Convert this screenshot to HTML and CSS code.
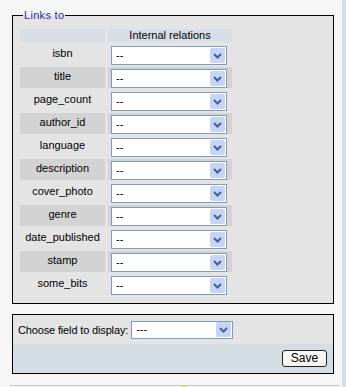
FILE: index.html
```html
<!DOCTYPE html>
<html>
<head>
<meta charset="utf-8">
<link rel="stylesheet" href="styles.css">
</head>
<body>
<div class="page">
  <div class="main">
    <fieldset class="links">
      <legend>Links to</legend>
      <table class="rel">
        <tr class="head"><th class="c1"></th><th class="c2">Internal relations</th></tr>
        <tr><td class="lbl">isbn</td><td class="fld"><div class="sel"><span>--</span><i class="arr"><svg width="9" height="6" viewBox="0 0 9 6"><path d="M1 1 L4.5 4.5 L8 1" fill="none" stroke="#4a5f8a" stroke-width="2"/></svg></i></div></td></tr>
        <tr class="alt"><td class="lbl">title</td><td class="fld"><div class="sel"><span>--</span><i class="arr"><svg width="9" height="6" viewBox="0 0 9 6"><path d="M1 1 L4.5 4.5 L8 1" fill="none" stroke="#4a5f8a" stroke-width="2"/></svg></i></div></td></tr>
        <tr><td class="lbl">page_count</td><td class="fld"><div class="sel"><span>--</span><i class="arr"><svg width="9" height="6" viewBox="0 0 9 6"><path d="M1 1 L4.5 4.5 L8 1" fill="none" stroke="#4a5f8a" stroke-width="2"/></svg></i></div></td></tr>
        <tr class="alt"><td class="lbl">author_id</td><td class="fld"><div class="sel"><span>--</span><i class="arr"><svg width="9" height="6" viewBox="0 0 9 6"><path d="M1 1 L4.5 4.5 L8 1" fill="none" stroke="#4a5f8a" stroke-width="2"/></svg></i></div></td></tr>
        <tr><td class="lbl">language</td><td class="fld"><div class="sel"><span>--</span><i class="arr"><svg width="9" height="6" viewBox="0 0 9 6"><path d="M1 1 L4.5 4.5 L8 1" fill="none" stroke="#4a5f8a" stroke-width="2"/></svg></i></div></td></tr>
        <tr class="alt"><td class="lbl">description</td><td class="fld"><div class="sel"><span>--</span><i class="arr"><svg width="9" height="6" viewBox="0 0 9 6"><path d="M1 1 L4.5 4.5 L8 1" fill="none" stroke="#4a5f8a" stroke-width="2"/></svg></i></div></td></tr>
        <tr><td class="lbl">cover_photo</td><td class="fld"><div class="sel"><span>--</span><i class="arr"><svg width="9" height="6" viewBox="0 0 9 6"><path d="M1 1 L4.5 4.5 L8 1" fill="none" stroke="#4a5f8a" stroke-width="2"/></svg></i></div></td></tr>
        <tr class="alt"><td class="lbl">genre</td><td class="fld"><div class="sel"><span>--</span><i class="arr"><svg width="9" height="6" viewBox="0 0 9 6"><path d="M1 1 L4.5 4.5 L8 1" fill="none" stroke="#4a5f8a" stroke-width="2"/></svg></i></div></td></tr>
        <tr><td class="lbl">date_published</td><td class="fld"><div class="sel"><span>--</span><i class="arr"><svg width="9" height="6" viewBox="0 0 9 6"><path d="M1 1 L4.5 4.5 L8 1" fill="none" stroke="#4a5f8a" stroke-width="2"/></svg></i></div></td></tr>
        <tr class="alt"><td class="lbl">stamp</td><td class="fld"><div class="sel"><span>--</span><i class="arr"><svg width="9" height="6" viewBox="0 0 9 6"><path d="M1 1 L4.5 4.5 L8 1" fill="none" stroke="#4a5f8a" stroke-width="2"/></svg></i></div></td></tr>
        <tr><td class="lbl">some_bits</td><td class="fld"><div class="sel"><span>--</span><i class="arr"><svg width="9" height="6" viewBox="0 0 9 6"><path d="M1 1 L4.5 4.5 L8 1" fill="none" stroke="#4a5f8a" stroke-width="2"/></svg></i></div></td></tr>
      </table>
    </fieldset>

    <div class="display">
      <div class="choose">
        <span class="choose-lbl">Choose field to display:</span>
        <div class="sel sel-wide"><span>---</span><i class="arr"><svg width="9" height="6" viewBox="0 0 9 6"><path d="M1 1 L4.5 4.5 L8 1" fill="none" stroke="#4a5f8a" stroke-width="2"/></svg></i></div>
      </div>
      <div class="actions">
        <button class="save">Save</button>
      </div>
    </div>

    <div class="foot">
      <span class="mark"></span>
    </div>
  </div>
  <div class="strip"></div>
</div>
</body>
</html>
```

FILE: styles.css
```css
html, body {
  margin: 0;
  padding: 0;
}
body {
  background: #f6f6f6;
  font-family: "Liberation Sans", Arial, sans-serif;
  font-size: 11px;
  color: #000;
  width: 346px;
  height: 387px;
  overflow: hidden;
}
.page {
  display: flex;
  height: 387px;
}
.main {
  width: 342px;
  padding: 9px 0 0 12px;
  box-sizing: border-box;
}
.strip {
  width: 4px;
  background: #d3dff0;
}
.links {
  width: 322px;
  box-sizing: border-box;
  margin: 0;
  padding: 5px 5px 6px 5px;
  border: 1px solid #000;
  background: #e4e4e4;
}
.links legend {
  color: #2b2ba6;
  font-size: 11px;
  line-height: 13px;
  padding: 0 1px;
  margin-left: 5px;
  letter-spacing: 0.3px;
}
.rel {
  border-collapse: separate;
  border-spacing: 3px 2px;
  margin-left: -1px;
}
.rel th {
  background: #d7dee6;
  height: 13px;
  padding: 0;
  font-weight: normal;
  font-size: 11px;
  line-height: 13px;
}
.rel .c1 { width: 85px; }
.rel .c2 { width: 124px; }
.rel td {
  height: 21px;
  padding: 0;
  font-weight: normal;
}
.rel tr.alt td {
  background: #d3d3d3;
}
.lbl {
  text-align: center;
  vertical-align: middle;
  padding-bottom: 3px !important;
  box-sizing: border-box;
}
.fld {
  vertical-align: top;
}
.fld .sel {
  margin: 2px 0 0 3px;
}
.sel {
  width: 116px;
  height: 19px;
  box-sizing: border-box;
  border: 1px solid #7f9db9;
  background: #fff;
  display: flex;
  align-items: center;
  justify-content: space-between;
  padding: 0 1px 0 4px;
}
.sel span {
  font-size: 11px;
  line-height: 13px;
}
.arr {
  width: 15px;
  height: 15px;
  background: #c6d4f7;
  border-radius: 2px;
  display: flex;
  align-items: center;
  justify-content: center;
}
.display {
  width: 322px;
  box-sizing: border-box;
  margin-top: 10px;
  border: 1px solid #000;
}
.choose {
  background: #e4e4e4;
  height: 29px;
  display: flex;
  align-items: center;
  padding-left: 5px;
  box-sizing: border-box;
}
.choose-lbl {
  margin-right: 3px;
  letter-spacing: -0.15px;
}
.sel-wide {
  width: 102px;
  height: 18px;
}
.actions {
  background: #d4dce4;
  height: 29px;
  display: flex;
  justify-content: flex-end;
  align-items: flex-start;
  padding: 6px 6px 0 0;
  box-sizing: border-box;
}
.save {
  font-family: "Liberation Sans", Arial, sans-serif;
  font-size: 12px;
  width: 45px;
  height: 17px;
  padding: 0;
  line-height: 15px;
  border: 1px solid #222;
  border-radius: 3px;
  background: #f6f6f2;
  color: #000;
}
.foot {
  margin: 11px 2px 0 -2px;
  border-top: 1px solid #c8c8c8;
  position: relative;
  height: 4px;
}
.mark {
  position: absolute;
  left: 171px;
  top: 0;
  width: 6px;
  height: 3px;
  background: #f0d860;
}
```
